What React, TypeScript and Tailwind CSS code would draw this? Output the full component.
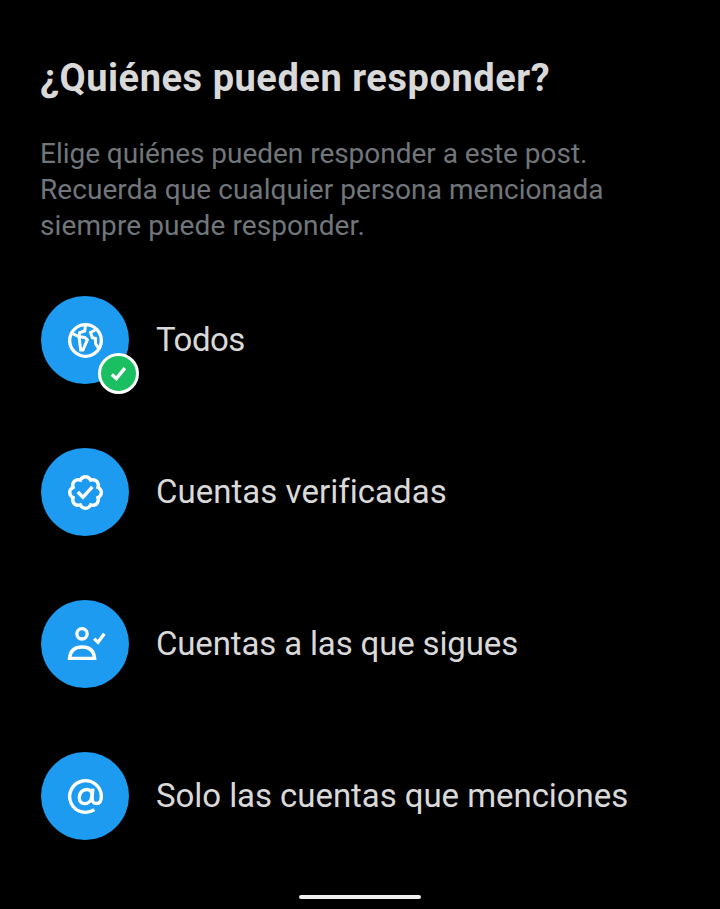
import type { ReactNode } from "react";

const Globe = () => (
  <svg viewBox="-0.3 -0.3 24.6 24.6" className="size-[41px]" fill="none" stroke="white" strokeWidth="2">
    <circle cx="12" cy="12" r="9.5" />
    <path strokeWidth="1.8" d="M3.6 7.6 8.1 9.7l1 8h1.4l2.6-6.1-1.5-1.4-3.5-.5.4-2.4 3-1L12 2.8" />
    <path strokeWidth="1.8" d="M18.4 5.4 15 7.2l1.1 3.1 1.9.5v3l1.7 2.6" />
  </svg>
);

const Verified = () => (
  <svg viewBox="0 0 24 24" className="size-[41px]" fill="white">
    <path d="M8.52 3.59c.8-1.1 2.04-1.84 3.48-1.84s2.68.74 3.49 1.84c1.34-.21 2.74.14 3.76 1.16s1.37 2.42 1.16 3.77c1.1.8 1.84 2.04 1.84 3.48s-.74 2.68-1.84 3.48c.21 1.34-.14 2.75-1.16 3.77s-2.42 1.37-3.76 1.16c-.8 1.1-2.05 1.84-3.49 1.84s-2.68-.74-3.48-1.84c-1.34.21-2.75-.14-3.77-1.16-1.01-1.02-1.37-2.42-1.16-3.77-1.09-.8-1.84-2.04-1.84-3.48s.75-2.68 1.84-3.48c-.21-1.35.14-2.75 1.16-3.77s2.43-1.37 3.77-1.16zm3.48.16c-.85 0-1.66.53-2.12 1.43l-.38.77-.82-.27c-.96-.32-1.91-.12-2.51.49-.6.6-.8 1.54-.49 2.51l.27.81-.77.39c-.9.46-1.43 1.27-1.43 2.12s.53 1.66 1.43 2.12l.77.39-.27.81c-.31.97-.11 1.91.49 2.51.6.61 1.55.81 2.51.49l.82-.27.38.77c.46.9 1.27 1.43 2.12 1.43s1.66-.53 2.12-1.43l.39-.77.82.27c.96.32 1.9.12 2.51-.49.6-.6.8-1.55.48-2.51l-.26-.81.76-.39c.91-.46 1.43-1.27 1.43-2.12s-.52-1.66-1.43-2.12l-.77-.39.27-.81c.32-.97.12-1.91-.48-2.51-.61-.61-1.55-.81-2.51-.49l-.82.27-.39-.77c-.46-.9-1.27-1.43-2.12-1.43zm4.74 5.68l-6.2 6.77-3.74-3.74 1.41-1.42 2.26 2.26 4.8-5.23 1.47 1.36z" />
  </svg>
);

const Following = () => (
  <svg viewBox="-0.3 -0.3 24.6 24.6" className="size-[41px] overflow-visible" fill="none" stroke="white" strokeWidth="2">
    <circle cx="9.9" cy="5.6" r="3.1" />
    <path d="M2.4 20.3c.4-4.4 3.2-6.8 7.6-6.8s7.1 2.4 7.5 6.8z" />
    <path d="m17.2 8.5 2.3 2.2 3.8-5.1" />
  </svg>
);

const Mention = () => (
  <svg viewBox="-0.3 -0.3 24.6 24.6" className="size-[41px]" fill="none" stroke="white" strokeWidth="2">
    <path d="M17.3 19.9A9.5 9.5 0 1 1 21.5 12c0 2.6-1 4.2-2.9 4.2-1.8 0-2.8-1.3-2.6-3.5l.4-5.4" />
    <path d="M15.9 11.4c.1-2.2-1.1-3.6-3.2-3.6-2.5 0-4.4 2-4.4 4.8 0 2.3 1.2 3.7 3.2 3.7 2.4 0 4.2-1.9 4.4-4.9z" />
  </svg>
);

interface Option {
  label: string;
  spacing: string;
  icon: ReactNode;
  selected?: boolean;
}

const options: Option[] = [
  { label: "Todos", spacing: "tracking-[-0.5px]", icon: <Globe />, selected: true },
  { label: "Cuentas verificadas", spacing: "tracking-[0.03px]", icon: <Verified /> },
  { label: "Cuentas a las que sigues", spacing: "tracking-[-0.15px]", icon: <Following /> },
  { label: "Solo las cuentas que menciones", spacing: "tracking-[-0.06px]", icon: <Mention /> },
];

export default function App() {
  return (
    <main className="flex h-[909px] w-[720px] flex-col overflow-hidden bg-black pl-10 font-['Roboto',sans-serif] text-[#d9d9d9]">
      <h1 className="mt-[54px] text-[38px] leading-[48px] font-bold whitespace-nowrap">
        <span className="tracking-[0.54px]">¿Quiénes pueden responder?</span>
      </h1>
      <p className="mt-[34px] text-[28px] leading-9 whitespace-nowrap text-[#71767b]">
        <span className="tracking-[-0.03px]">Elige quiénes pueden responder a este post.</span>
        <br />
        <span className="tracking-[0.06px]">Recuerda que cualquier persona mencionada</span>
        <br />
        <span className="tracking-[0.1px]">siempre puede responder.</span>
      </p>
      <ul className="mt-[52px] ml-px flex flex-col gap-16">
        {options.map(({ label, spacing, icon, selected }) => (
          <li key={label} className="flex h-[88px] items-center gap-[27px]">
            <div className="relative flex size-[88px] shrink-0 items-center justify-center rounded-full bg-[#1d9bf0] pt-px pl-px">
              {icon}
              {selected && (
                <div className="absolute -right-2.5 -bottom-2.5 flex size-[41px] items-center justify-center rounded-full border-[3px] border-white bg-[#19bf61]">
                  <svg viewBox="0 0 20 20" className="size-5" fill="none" stroke="white" strokeWidth="3.4">
                    <path d="m2.8 10.4 4.5 4.2 8.6-10.4" />
                  </svg>
                </div>
              )}
            </div>
            <span className={`text-[33px] leading-10 whitespace-nowrap ${spacing}`}>{label}</span>
          </li>
        ))}
      </ul>
      <div className="mt-[55px] ml-[259px] h-1 w-[122px] rounded-full bg-[#eeeeee]" />
    </main>
  );
}
